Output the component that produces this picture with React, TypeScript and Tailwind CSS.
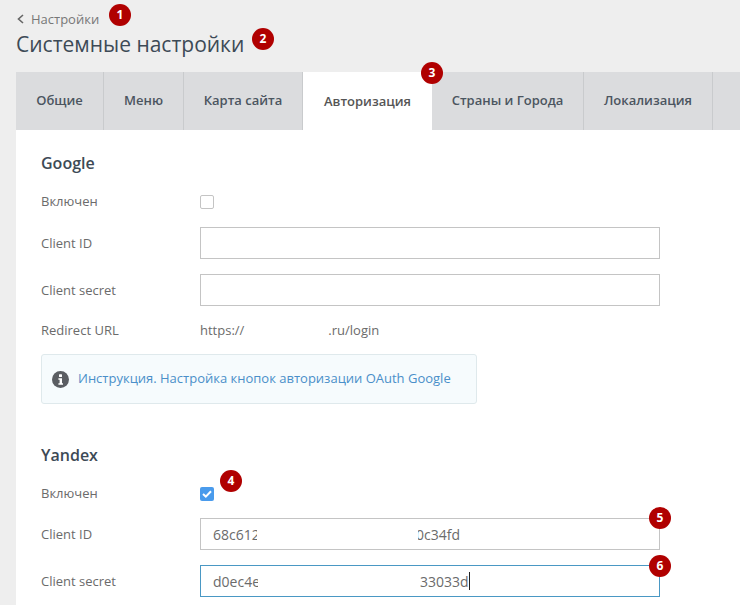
const font = "font-['Open_Sans',sans-serif]";

function Badge({ n, className }: { n: number; className: string }) {
  return (
    <span
      className={`absolute flex h-[22px] w-[22px] items-center justify-center rounded-full bg-[#b00000] text-[12px] font-bold leading-none text-white ${className}`}
    >
      {n}
    </span>
  );
}

const tabs = [
  { label: "Общие", width: "w-[88px]" },
  { label: "Меню", width: "w-[80px]" },
  { label: "Карта сайта", width: "w-[119px]" },
  { label: "Авторизация", width: "w-[129px]", active: true },
  { label: "Страны и Города", width: "w-[152px]" },
  { label: "Локализация", width: "w-[129px]" },
];

function Row({
  label,
  className,
  boxed,
  children,
}: {
  label: string;
  className: string;
  boxed?: boolean;
  children: React.ReactNode;
}) {
  return (
    <div className={`flex items-center ${className}`}>
      <div className={`w-[159px] shrink-0 text-[13px] text-[#6b6b6b] ${boxed ? "pt-[2px]" : ""}`}>{label}</div>
      {children}
    </div>
  );
}

function TextBox({ className = "" }: { className?: string }) {
  return <div className={`h-8 w-[460px] border border-[#c4c4c4] bg-white ${className}`} />;
}

export default function App() {
  return (
    <div className={`${font} h-[605px] w-[740px] overflow-hidden bg-[#eeeeee]`}>
      <div className="h-[72px] pl-4">
        <div className="relative flex h-[38px] items-end pb-[11px] text-[13px] leading-4 text-[#777]">
          <svg width="8" height="10" viewBox="0 0 8 10" className="mr-[7px] mb-[3px]" fill="none" stroke="#666" strokeWidth="1.6">
            <path d="M7 1 2.5 5 7 9" />
          </svg>
          Настройки
          <Badge n={1} className="left-[93px] top-[4px]" />
        </div>
        <div className="relative -mt-[8px] text-[21px] leading-7 text-[#3d4a56]">
          Системные настройки
          <Badge n={2} className="left-[236px] top-[-2px]" />
        </div>
      </div>

      <div className="ml-4 h-[533px] bg-white">
        <div className="relative flex h-[58px] bg-[#dbdcde]">
          {tabs.map((t) => (
            <div
              key={t.label}
              className={`flex shrink-0 items-center justify-center text-[13px] font-semibold ${t.width} ${
                t.active ? "bg-white pt-[1px] text-[#555]" : "border-r border-[#c9cbcd] text-[#4b5560]"
              }`}
            >
              {t.label}
            </div>
          ))}
          <Badge n={3} className="left-[405px] top-[-10px]" />
        </div>

        <div className="relative pl-[25px]">
          <h2 className="pt-[23px] text-[16px] font-semibold leading-5 text-[#3d4a56]">Google</h2>

          <Row label="Включен" className="mt-[19px] h-5">
            <div className="h-[14px] w-[14px] rounded-[2px] border border-[#c4c4c4] bg-white" />
          </Row>
          <Row label="Client ID" boxed className="mt-[15px]">
            <TextBox />
          </Row>
          <Row label="Client secret" boxed className="mt-[15px]">
            <TextBox />
          </Row>
          <Row label="Redirect URL" className="mt-[15px] h-5">
            <span className="text-[13px] text-[#6b6b6b]">https://</span>
            <span className="ml-[84px] text-[13px] text-[#6b6b6b]">.ru/login</span>
          </Row>

          <div className="mt-[13px] flex h-[50px] w-[436px] items-center rounded-[3px] border border-[#dfe9ec] bg-[#f6fbfd] pl-[10px]">
            <svg width="17" height="17" viewBox="0 0 17 17" className="shrink-0">
              <circle cx="8.5" cy="8.5" r="8.5" fill="#5a5d62" />
              <rect x="7" y="3.3" width="3" height="2.6" rx="0.5" fill="#fff" />
              <path d="M6.4 7.2h3.6v5h1v1.5H6.4v-1.5h1.2V8.7H6.4z" fill="#fff" />
            </svg>
            <span className="ml-[9px] text-[13px] text-[#4a8fc9]">Инструкция. Настройка кнопок авторизации OAuth Google</span>
          </div>

          <h2 className="mt-[41px] text-[16px] font-semibold leading-5 text-[#3d4a56]">Yandex</h2>

          <Row label="Включен" className="relative mt-[19px] h-5">
            <div className="flex h-[14px] w-[14px] items-center justify-center rounded-[2px] bg-[#4a9bec]">
              <svg width="10" height="8" viewBox="0 0 10 8" fill="none" stroke="#fff" strokeWidth="2">
                <path d="M1 4l2.8 2.6L9 1.2" />
              </svg>
            </div>
            <Badge n={4} className="left-[179px] top-[-14px]" />
          </Row>

          <Row label="Client ID" boxed className="relative mt-[14px]">
            <div className="flex h-8 w-[460px] items-center border border-[#c4c4c4] bg-white pl-[12px] text-[14px] text-[#6b6b6b]">
              <span className="w-[44px] overflow-hidden">68c612</span>
              <span className="ml-[161px] w-[43px] overflow-hidden whitespace-nowrap">
                <span className="-ml-[2px] block">0c34fd</span>
              </span>
            </div>
            <Badge n={5} className="left-[608px] top-[-11px]" />
          </Row>

          <Row label="Client secret" boxed className="relative mt-[15px]">
            <div className="flex h-8 w-[460px] items-center border border-[#4a98c4] bg-white pl-[12px] text-[14px] text-[#6b6b6b]">
              <span className="w-[45px] overflow-hidden whitespace-nowrap">d0ec4e</span>
              <span className="ml-[162px]">33033d</span>
              <span className="h-[18px] w-px bg-[#222]" />
            </div>
            <Badge n={6} className="left-[608px] top-[-10px]" />
          </Row>
        </div>
      </div>
    </div>
  );
}
